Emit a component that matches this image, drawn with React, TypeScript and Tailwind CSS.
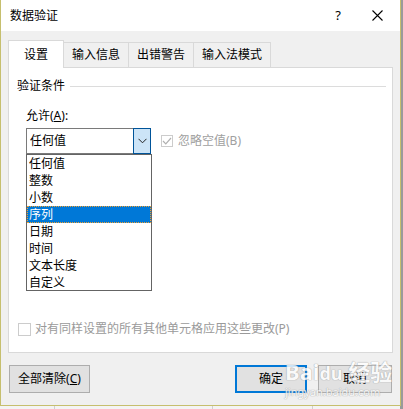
import React from "react";

const items = ["任何值", "整数", "小数", "序列", "日期", "时间", "文本长度", "自定义"];

export default function App() {
  return (
    <div
      className="relative w-[403px] h-[409px] bg-[#f4f4f4] overflow-hidden text-[12px] text-black"
      style={{ fontFamily: "'Noto Sans', 'Noto Sans CJK SC', sans-serif" }}
    >
      {/* background spreadsheet grid */}
      <div className="absolute right-0 top-0 w-[3px] h-full bg-[#9a9a9a]" />
      <div className="absolute left-[54px] top-[400px] w-px h-[9px] bg-[#d0d0d0]" />
      <div className="absolute left-[212px] top-[400px] w-px h-[9px] bg-[#d0d0d0]" />
      <div className="absolute left-[312px] top-[400px] w-px h-[9px] bg-[#d0d0d0]" />

      {/* dialog */}
      <div className="relative w-[401px] h-[406px] border-l border-r border-b border-[#c6bf6e] bg-[#f0f0f0] flex flex-col">
        {/* title bar */}
        <div className="h-[31px] bg-white flex items-center pl-[9px] shrink-0">
          <span className="text-[12px] leading-none">数据验证</span>
          <span className="ml-auto mr-[31px] text-[13px] leading-none">?</span>
          <svg width="11" height="11" viewBox="0 0 11 11" className="mr-[17px]">
            <path d="M0.5 0.5 L10.5 10.5 M10.5 0.5 L0.5 10.5" stroke="#000" strokeWidth="1.1" />
          </svg>
        </div>

        {/* body */}
        <div className="flex-1 flex flex-col px-[7px] pt-[9px]">
          {/* tabs */}
          <div className="flex items-end h-[27px] relative z-10">
            <div className="w-[56px] h-[28px] -mb-px bg-white border border-b-0 border-[#d9d9d9] flex items-center justify-center">
              设置
            </div>
            <div className="w-[65px] h-[25px] border border-l-0 border-b-0 border-[#d9d9d9] flex items-center justify-center">
              输入信息
            </div>
            <div className="w-[65px] h-[25px] border border-l-0 border-b-0 border-[#d9d9d9] flex items-center justify-center">
              出错警告
            </div>
            <div className="w-[77px] h-[25px] border border-l-0 border-b-0 border-[#d9d9d9] flex items-center justify-center">
              输入法模式
            </div>
          </div>

          {/* panel */}
          <div className="relative w-[385px] h-[286px] bg-white border border-[#d9d9d9] flex flex-col">
            <div className="flex items-center mt-[12px] ml-[8px] mr-[6px]">
              <span className="leading-none">验证条件</span>
              <div className="flex-1 h-px bg-[#dcdcdc] ml-[5px]" />
            </div>
            <div className="ml-[17px] mt-[18px] leading-none">
              允许(<span className="underline">A</span>):
            </div>
            <div className="flex items-center ml-[17px] mt-[6px]">
              <div className="w-[125px] h-[26px] border border-[#7a7a7a] flex items-stretch bg-white">
                <div className="flex-1 flex items-center pl-[3px] text-[12px]">任何值</div>
                <div className="w-[18px] -my-px -mr-px bg-[#cce4f7] border border-[#005499] flex items-center justify-center">
                  <svg width="9" height="6" viewBox="0 0 9 6">
                    <path d="M0.5 0.8 L4.5 4.8 L8.5 0.8" fill="none" stroke="#222" strokeWidth="1" />
                  </svg>
                </div>
              </div>
              <div className="flex items-center ml-[10px] text-[#a0a0a0]">
                <div className="w-[12px] h-[12px] border border-[#cccccc] flex items-center justify-center">
                  <svg width="10" height="8" viewBox="0 0 10 8">
                    <path d="M1 4 L3.8 6.8 L9 1" fill="none" stroke="#b0b0b0" strokeWidth="1.2" />
                  </svg>
                </div>
                <span className="ml-[5px]">忽略空值(B)</span>
              </div>
            </div>

            <div className="mt-auto mb-[14px] ml-[9px] flex items-center text-[#9a9a9a]">
              <div className="w-[13px] h-[13px] border border-[#cccccc]" />
              <span className="ml-[4px]">对有同样设置的所有其他单元格应用这些更改(P)</span>
            </div>

            {/* dropdown list */}
            <div className="absolute left-[17px] top-[86px] w-[126px] h-[137px] bg-white border border-[#646464] flex flex-col z-20">
              {items.map((t) => (
                <div
                  key={t}
                  className={
                    t === "序列"
                      ? "h-[17px] flex items-center pl-[2px] bg-[#0078d7] text-white outline-1 outline-dotted outline-[#f0a030] -outline-offset-1"
                      : "h-[17px] flex items-center pl-[2px]"
                  }
                >
                  {t}
                </div>
              ))}
            </div>
          </div>

          {/* buttons */}
          <div className="flex items-center mt-[12px] pl-px">
            <div className="w-[81px] h-[28px] bg-[#e1e1e1] border border-[#adadad] flex items-center justify-center">
              全部清除(<span className="underline">C</span>)
            </div>
            <div className="ml-auto w-[72px] h-[28px] bg-[#e1e1e1] border-2 border-[#0078d7] flex items-center justify-center">
              确定
            </div>
            <div className="ml-[11px] mr-[1px] w-[74px] h-[28px] bg-[#e1e1e1] border border-[#adadad] flex items-center justify-center">
              取消
            </div>
          </div>
        </div>

        {/* watermark */}
        <div className="absolute left-[284px] top-[360px] flex flex-col items-start pointer-events-none opacity-80">
          <span className="text-[22px] font-bold leading-none text-white [text-shadow:0_0_1px_#9a9a9a,0_0_1px_#9a9a9a]">
            Bai<span className="text-[18px]">du</span> 经验
          </span>
          <span className="text-[11px] leading-none mt-[4px] text-white [text-shadow:0_0_1px_#9a9a9a,0_0_1px_#9a9a9a]">
            jingyan.baidu.com
          </span>
        </div>
      </div>
    </div>
  );
}
